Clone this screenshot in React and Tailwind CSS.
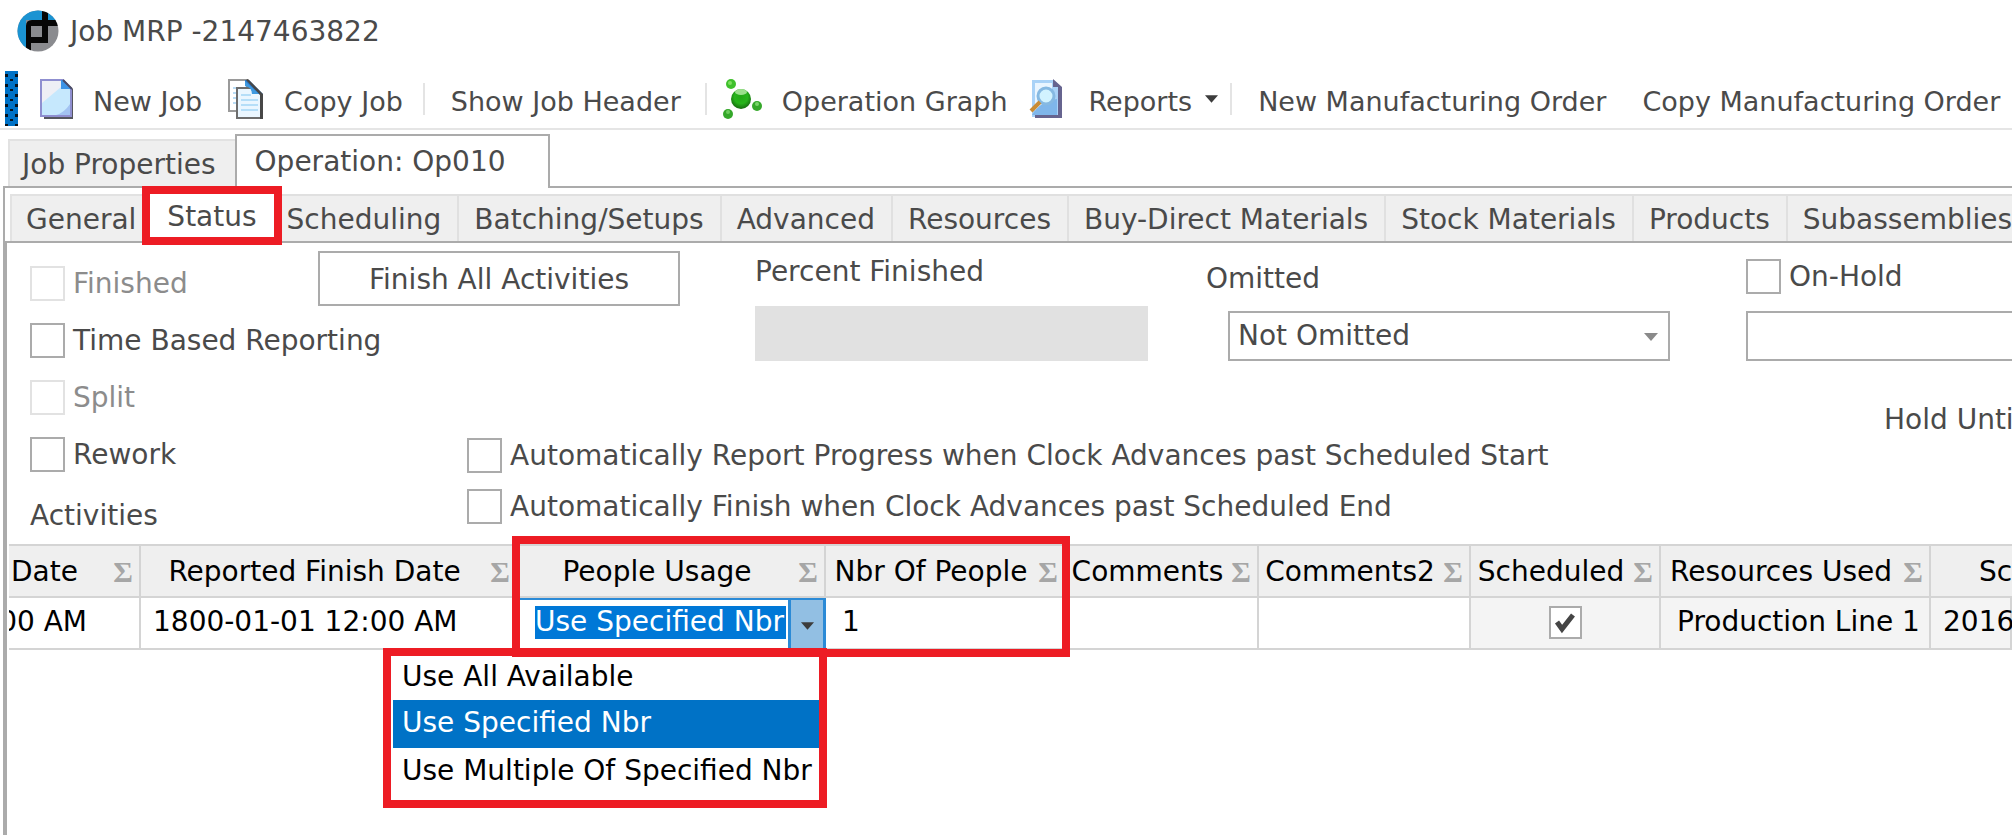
// Job window: operation status tab with the activities grid

import React from 'react'

const TABS = [
  'Scheduling', 'Batching/Setups', 'Advanced', 'Resources',
  'Buy-Direct Materials', 'Stock Materials', 'Products', 'Subassemblies',
]

const COLUMNS = ['Reported Finish Date', 'People Usage', 'Nbr Of People',
                 'Comments', 'Comments2', 'Scheduled', 'Resources Used']

const USAGE_OPTIONS = ['Use All Available', 'Use Specified Nbr', 'Use Multiple Of Specified Nbr']

function AppLogo() {
  return (
    <svg className="w-[42px] h-[42px]" viewBox="0 0 42 42" aria-hidden="true">
      <defs>
        <clipPath id="disc"><circle cx="21" cy="21" r="20.5" /></clipPath>
      </defs>
      <g clipPath="url(#disc)">
        <rect width="42" height="42" fill="#8a8b8f" />
        <path d="M0 0h25v10H9v32H0z" fill="#1b93d2" />
        <path d="M30 0h12v10H30z" fill="#1b93d2" />
        <path d="M25 0h6v10h11v6H31v17H14v9H9V16q0-6 6-6h10z" fill="#060606" />
        <rect x="14" y="16" width="11" height="11" fill="#8a8b8f" />
      </g>
    </svg>
  )
}

function NewIcon() {
  return (
    <svg className="w-[34px] h-10" viewBox="0 0 34 40" aria-hidden="true">
      <path d="M4 37v3h29V10l-3-3v30z" fill="#55565f" />
      <path d="M1 1h22l8 9v27H1z" fill="#c6e8fd" stroke="#8f8fd0" strokeWidth="2" />
      <path d="M2 2h19v6L2 24z" fill="#eeeff5" />
      <path d="M30 25v11H16q8-2 14-11z" fill="#a3c3f2" />
      <path d="M21 1h3l8 9H21z" fill="#3d94e6" />
      <path d="M23 1l9 9" stroke="#4b4b66" strokeWidth="2" />
    </svg>
  )
}

function CopyIcon() {
  return (
    <svg className="w-9 h-10" viewBox="0 0 36 40" aria-hidden="true">
      <path d="M1 1h18v31H1z" fill="#fff" stroke="#9a9a9a" strokeWidth="2" />
      <path d="M5 9h4M5 14h4M5 19h4M5 24h4" stroke="#b9dcf5" strokeWidth="2" />
      <path d="M9 9h16l9 7v23H9z" fill="#eaf6ff" stroke="#6d6d6d" strokeWidth="2" />
      <path d="M13 16h10M13 21h17M13 26h17M13 31h17" stroke="#b5def8" strokeWidth="2" />
      <path d="M17 1h4l14 14H24q0-8-7-8z" fill="#2b78c8" />
      <path d="M20 0l15 15v25h-3V16L18 1z" fill="#474747" />
      <path d="M17 2l14 13h-7q0-7-7-8z" fill="#3f9ae0" />
    </svg>
  )
}

function GraphIcon() {
  return (
    <svg className="w-10 h-10" viewBox="0 0 40 40" aria-hidden="true">
      <defs>
        <radialGradient id="ball" cx="0.5" cy="0.4" r="0.6">
          <stop offset="0" stopColor="#22a815" />
          <stop offset="0.55" stopColor="#27b41b" />
          <stop offset="1" stopColor="#15690f" />
        </radialGradient>
      </defs>
      <circle cx="8" cy="5" r="5" fill="#3fc02c" />
      <circle cx="5" cy="35" r="5" fill="#35a82a" />
      <circle cx="34" cy="27" r="5" fill="#35a82a" />
      <circle cx="18" cy="20" r="10" fill="url(#ball)" />
      <ellipse cx="18" cy="13" rx="6" ry="3" fill="#9be08c" />
      <circle cx="7" cy="4" r="2" fill="#7ce05e" />
      <circle cx="34" cy="25" r="2" fill="#7ad46b" />
      <circle cx="5" cy="33" r="2" fill="#6dcc5e" />
    </svg>
  )
}

function ReportIcon() {
  return (
    <svg className="w-[34px] h-10" viewBox="0 0 34 40" aria-hidden="true">
      <path d="M3 1h22l7 7v30H3z" fill="#a9d2f7" />
      <path d="M6 4h17v22L6 36z" fill="#e9f5ff" />
      <path d="M24 0l9 8v31H6v-3h23V8h-5z" fill="#66648f" />
      <path d="M3 36q8-14 25-16v16z" fill="#7fb6ea" />
      <circle cx="17" cy="17" r="8" fill="#d2f3ff" stroke="#86b9e2" strokeWidth="3" />
      <path d="M11 23l-9 9" stroke="#c98c35" strokeWidth="4" />
    </svg>
  )
}

function Caret({ className }) {
  return (
    <svg className={className} viewBox="0 0 14 8" aria-hidden="true">
      <path d="M0 0h14L7 8z" fill="currentColor" />
    </svg>
  )
}

function ToolButton({ children }) {
  return <button type="button" className="pt-1.5 text-[27px] leading-8">{children}</button>
}

function ToolSeparator({ className }) {
  return <span className={`w-[2px] h-8 bg-[#e4e4e4] ${className}`} />
}

function CheckField({ label, disabled }) {
  return (
    <label className={`flex items-center gap-2 leading-8 ${disabled ? 'text-[#8c8c8c]' : ''}`}>
      <input
        type="checkbox"
        disabled={disabled}
        className="appearance-none shrink-0 w-[35px] h-[35px] border-2 border-[#ababab] bg-white disabled:border-[#e2e2e2]"
      />
      {label}
    </label>
  )
}

function Toolbar() {
  return (
    <div className="flex items-center h-[68px] pt-[7px] pl-[5px] border-b-2 border-[#e5e5e5]">
      <svg className="w-[13px] h-[55px] mr-[22px]" aria-hidden="true">
        <defs>
          <pattern id="grip" width="10" height="10" patternUnits="userSpaceOnUse">
            <rect width="10" height="10" fill="#0072c6" />
            <rect x="0" y="3" width="3" height="3" fill="#06121c" />
            <rect x="5" y="8" width="3" height="3" fill="#06121c" />
          </pattern>
        </defs>
        <rect width="13" height="55" fill="url(#grip)" />
      </svg>
      <div className="flex items-center gap-[19px] mr-[26px]"><NewIcon /><ToolButton>New Job</ToolButton></div>
      <div className="flex items-center gap-5"><CopyIcon /><ToolButton>Copy Job</ToolButton></div>
      <ToolSeparator className="ml-5 mr-[26px]" />
      <ToolButton>Show Job Header</ToolButton>
      <ToolSeparator className="ml-6 mr-4" />
      <div className="flex items-center gap-[19px] mr-[21px]"><GraphIcon /><ToolButton>Operation Graph</ToolButton></div>
      <div className="flex items-center gap-[26px]"><ReportIcon /><ToolButton>Reports</ToolButton></div>
      <Caret className="w-[13px] h-2 ml-[13px] text-[#3c3c3c]" />
      <ToolSeparator className="ml-3 mr-[26px]" />
      <div className="flex items-center gap-9">
        <ToolButton>New Manufacturing Order</ToolButton>
        <ToolButton>Copy Manufacturing Order</ToolButton>
      </div>
    </div>
  )
}

function StatusForm() {
  return (
    <form className="flex pl-[23px]">
      <div className="w-72 shrink-0 pt-3">
        <div className="flex items-center h-[57px]"><CheckField label="Finished" disabled /></div>
        <div className="flex items-center h-[57px]"><CheckField label="Time Based Reporting" /></div>
        <div className="flex items-center h-[57px]"><CheckField label="Split" disabled /></div>
        <div className="flex items-center h-[57px]"><CheckField label="Rework" /></div>
        <div className="flex items-center h-[61px] pt-1">Activities</div>
      </div>

      <div className="flex-1 min-w-0">
        <div className="flex items-start">
          <div className="w-[437px] shrink-0 pt-2">
            <button type="button" className="w-[362px] h-[55px] pt-0.5 border-2 border-[#ababab] leading-8">
              Finish All Activities
            </button>
          </div>
          <div className="w-[451px] shrink-0 pt-[13px]">
            <label htmlFor="percent" className="block leading-8">Percent Finished</label>
            <input id="percent" disabled className="block w-[393px] h-[55px] mt-[18px] bg-[#e1e1e1]" />
          </div>
          <div className="w-[540px] shrink-0 pt-5">
            <label htmlFor="omitted" className="block leading-8">Omitted</label>
            <div className="relative w-[442px] mt-4 ml-[22px]">
              <select id="omitted" className="appearance-none block w-full h-[50px] pl-2 border-2 border-[#ababab] bg-white">
                <option>Not Omitted</option>
              </select>
              <Caret className="absolute right-3 top-[22px] w-3.5 h-2 text-[#8a8a8a] pointer-events-none" />
            </div>
          </div>
          <div className="flex-1 min-w-0 pt-4">
            <CheckField label="On-Hold" />
            <input aria-label="Hold reason" className="block w-full h-[50px] mt-[17px] border-2 border-r-0 border-[#ababab]" />
            <div className="mt-[43px] pl-[138px] leading-8">Hold Unti</div>
          </div>
        </div>
        <div className="flex flex-col gap-4 pt-0.5 pl-[149px]">
          <CheckField label="Automatically Report Progress when Clock Advances past Scheduled Start" />
          <CheckField label="Automatically Finish when Clock Advances past Scheduled End" />
        </div>
      </div>
    </form>
  )
}

function HeaderCell({ label, labelClass = 'text-center' }) {
  return (
    <th className="h-[54px] p-0 pt-0.5 bg-[#efefef] border-y-2 border-r-2 border-[#d4d4d4] font-normal">
      <div className="flex items-center">
        <span className={`flex-1 ${labelClass}`}>{label}</span>
        <span className="w-7 pr-1 text-center text-[30px] font-bold text-[#a6a6a6] font-['Liberation_Serif',serif]">Σ</span>
      </div>
    </th>
  )
}

function ActivitiesGrid() {
  const cell = 'h-[52px] p-0 pb-0.5 border-b-2 border-r-2 border-[#d4d4d4]'
  return (
    <div className="relative pl-0.5 text-black">
      <table className="table-fixed w-full border-separate border-spacing-0 leading-8">
        <colgroup>
          <col className="w-[132px]" />
          <col className="w-[377px]" />
          <col className="w-[308px]" />
          <col className="w-[240px]" />
          <col className="w-[193px]" />
          <col className="w-[212px]" />
          <col className="w-[190px]" />
          <col className="w-[270px]" />
          <col />
        </colgroup>
        <thead>
          <tr>
            <HeaderCell label="Date" labelClass="text-left pl-0.5" />
            {COLUMNS.map(c => <HeaderCell key={c} label={c} />)}
            <th className="h-[54px] p-0 pt-0.5 pl-12 bg-[#efefef] border-y-2 border-[#d4d4d4] font-normal text-left">Sc</th>
          </tr>
        </thead>
        <tbody>
          <tr>
            <td className={cell}>
              <div className="flex justify-end pr-[52px] overflow-hidden whitespace-nowrap">00 AM</div>
            </td>
            <td className={`${cell} pl-3`}>1800-01-01 12:00 AM</td>
            <td className="h-[52px] p-0 border-b-2 border-[#2b8ad6]">
              <div className="flex items-center h-[50px] border-t-2 border-[#2b8ad6] pl-[17px]">
                <select
                  aria-label="People Usage"
                  defaultValue="Use Specified Nbr"
                  className="appearance-none flex-1 min-w-0 h-[33px] mb-1 leading-8 bg-[#0078d7] text-white"
                >
                  {USAGE_OPTIONS.map(o => <option key={o}>{o}</option>)}
                </select>
                <button
                  type="button"
                  aria-label="Open list"
                  className="flex items-center justify-center w-[38px] h-full ml-0.5 pt-1 bg-[#92bfe3] border-x-3 border-[#2b8ad6]"
                >
                  <Caret className="w-[13px] h-2 text-[#3c3c3c]" />
                </button>
              </div>
            </td>
            <td className={`${cell} pl-4`}>1</td>
            <td className={cell} />
            <td className={cell} />
            <td className={`${cell} bg-[#f4f4f4]`}>
              <div className="relative w-[33px] h-[33px] mx-auto">
                <input
                  type="checkbox"
                  aria-label="Scheduled"
                  defaultChecked
                  className="appearance-none block w-full h-full border-2 border-[#ababab] bg-white"
                />
                <svg className="absolute inset-0 pointer-events-none" viewBox="0 0 33 33" aria-hidden="true">
                  <path d="M8 16l5 7L24 9" fill="none" stroke="#454545" strokeWidth="5" />
                </svg>
              </div>
            </td>
            <td className={`${cell} pl-4 bg-[#f4f4f4]`}>Production Line 1</td>
            <td className={`${cell} pl-3 bg-[#f4f4f4]`}>2016</td>
          </tr>
        </tbody>
      </table>

      {/* open list of the People Usage cell */}
      <ul
        role="listbox"
        aria-label="People Usage options"
        className="absolute top-[104px] left-[376px] w-[444px] h-40 border-8 border-[#ed1c24] bg-white"
      >
        <li role="option" aria-selected="false" className="flex items-center h-11 pl-[11px] pb-0.5">
          {USAGE_OPTIONS[0]}
        </li>
        <li role="option" aria-selected="true" className="flex items-center h-12 ml-0.5 pl-[9px] pb-0.5 bg-[#0072c6] text-white">
          {USAGE_OPTIONS[1]}
        </li>
        <li role="option" aria-selected="false" className="flex items-center h-12 pl-[11px] pb-0.5">
          {USAGE_OPTIONS[2]}
        </li>
      </ul>

      <div className="absolute -top-2 left-[505px] w-[558px] h-[121px] border-8 border-[#ed1c24] pointer-events-none" />
    </div>
  )
}

export default function App() {
  return (
    <div className="flex flex-col min-h-screen overflow-hidden bg-white text-[#4a4a4a] text-[28px] whitespace-nowrap font-['DejaVu_Sans',sans-serif]">
      <header className="flex items-center gap-[11px] h-[62px] pl-[17px]">
        <AppLogo />
        <h1 className="pt-0.5 leading-8">Job MRP -2147463822</h1>
      </header>

      <Toolbar />

      <main className="flex flex-col flex-1 pl-[3px]">
        <div role="tablist" className="flex items-end h-14 pl-[5px]">
          <button type="button" role="tab" className="h-[47px] pl-3 pr-[19px] pt-0.5 bg-[#efefef] border-t-2 border-l-2 border-[#e2e2e2]">
            Job Properties
          </button>
          <button type="button" role="tab" aria-selected="true" className="relative h-[54px] -mb-0.5 pl-[18px] pr-[42px] bg-white border-2 border-b-0 border-[#ababab]">
            Operation: Op010
          </button>
        </div>

        <div className="flex flex-col flex-1 border-t-2 border-l-2 border-[#ababab]">
          <div role="tablist" className="flex items-end h-[53px] pl-[5px]">
            <button type="button" role="tab" className="h-[47px] pl-3.5 pr-4 pt-0.5 bg-[#efefef] border-t-2 border-l-2 border-[#e2e2e2]">
              General
            </button>
            <button type="button" role="tab" aria-selected="true" className="relative z-10 h-[59px] -mb-1 -mx-2.5 px-[17px] pt-0.5 bg-white border-8 border-[#ed1c24]">
              Status
            </button>
            {TABS.map(t => (
              <button key={t} type="button" role="tab" className="h-[47px] pl-[15px] pr-4 pt-0.5 bg-[#efefef] border-t-2 border-r-2 border-[#e0e0e0]">
                {t}
              </button>
            ))}
          </div>

          <div className="flex-1 border-t-2 border-l-2 border-[#ababab]">
            <StatusForm />
            <ActivitiesGrid />
          </div>
        </div>
      </main>
    </div>
  )
}
